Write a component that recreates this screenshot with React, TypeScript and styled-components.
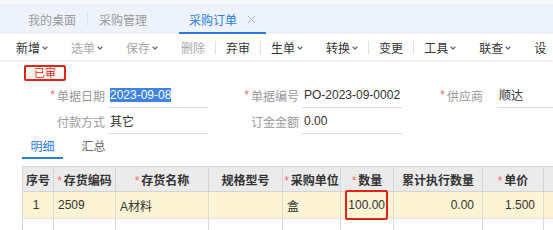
import styled, { createGlobalStyle } from 'styled-components'
import { FC, ReactNode } from 'react'

const GlobalStyle = createGlobalStyle`
  html, body {
    margin: 0;
    padding: 0;
    background: #fff;
  }
  body {
    width: 553px;
    height: 230px;
    overflow: hidden;
    font-family: "Liberation Sans", "Noto Sans CJK SC", sans-serif;
    font-size: 12px;
    color: #333;
  }
`

const Chevron: FC = () => (
  <ChevronSvg width='6' height='4' viewBox='0 0 6 4'>
    <path d='M0.6 0.6 L3 3 L5.4 0.6' fill='none' stroke='#666' strokeWidth='1.3' />
  </ChevronSvg>
)

const CloseIcon: FC = () => (
  <svg width='9' height='9' viewBox='0 0 9 9'>
    <path d='M1 1 L8 8 M8 1 L1 8' stroke='#aab4c4' strokeWidth='1' />
  </svg>
)

type ToolItem = { label: string; menu?: boolean; disabled?: boolean; sep?: boolean }

const tools: ToolItem[] = [
  { label: '新增', menu: true },
  { label: '选单', menu: true, disabled: true },
  { label: '保存', menu: true, disabled: true },
  { label: '删除', disabled: true, sep: true },
  { label: '弃审', sep: true },
  { label: '生单', menu: true },
  { label: '转换', menu: true, sep: true },
  { label: '变更', sep: true },
  { label: '工具', menu: true },
  { label: '联查', menu: true },
  { label: '设' },
]

const Field: FC<{ label: string; required?: boolean; children: ReactNode }> = ({
  label,
  required,
  children,
}) => (
  <>
    <Label>
      {required && <Star>*</Star>}
      {label}
    </Label>
    <Input>{children}</Input>
  </>
)

const columns = [
  { title: '序号', width: 31 },
  { title: '存货编码', width: 62, required: true },
  { title: '存货名称', width: 93, required: true },
  { title: '规格型号', width: 74 },
  { title: '采购单位', width: 58, required: true },
  { title: '数量', width: 53, required: true },
  { title: '累计执行数量', width: 89 },
  { title: '单价', width: 61, required: true },
  { title: '', width: 60 },
]

export default function App() {
  return (
    <Page>
      <GlobalStyle />
      <TopStrip />
      <TabBar>
        <PageTab>我的桌面</PageTab>
        <TabDivider />
        <PageTab>采购管理</PageTab>
        <PageTab $active>
          采购订单
          <CloseIcon />
        </PageTab>
      </TabBar>

      <Toolbar>
        {tools.map((t) => (
          <ToolGroup key={t.label}>
            <ToolButton $disabled={t.disabled}>
              {t.label}
              {t.menu && <Chevron />}
            </ToolButton>
            {t.sep && <ToolDivider />}
          </ToolGroup>
        ))}
      </Toolbar>

      <Content>
        <Stamp>已审</Stamp>
        <FormGrid>
          <Field label='单据日期' required>
            <Selected>2023-09-08</Selected>
          </Field>
          <Field label='单据编号' required>
            PO-2023-09-0002
          </Field>
          <Field label='供应商' required>
            顺达
          </Field>
          <Field label='付款方式'>其它</Field>
          <Field label='订金金额'>0.00</Field>
        </FormGrid>

        <DetailTabs>
          <DetailTab $active>明细</DetailTab>
          <DetailTab>汇总</DetailTab>
        </DetailTabs>

        <Table>
          <colgroup>
            {columns.map((c, i) => (
              <col key={i} style={{ width: c.width }} />
            ))}
          </colgroup>
          <thead>
            <tr>
              {columns.map((c, i) => (
                <Th key={i}>
                  {c.required && <Star>*</Star>}
                  {c.title}
                </Th>
              ))}
            </tr>
          </thead>
          <tbody>
            <BodyRow $active>
              <Td $align='center'>1</Td>
              <Td>2509</Td>
              <Td>A材料</Td>
              <Td />
              <Td>盒</Td>
              <Td $align='right'>
                <Marked>100.00</Marked>
              </Td>
              <Td $align='right'>0.00</Td>
              <Td $align='right'>1.500</Td>
              <Td />
            </BodyRow>
            <BodyRow>
              {columns.map((_, i) => (
                <Td key={i} />
              ))}
            </BodyRow>
          </tbody>
        </Table>
      </Content>
    </Page>
  )
}

const Page = styled.div`
  width: 553px;
  height: 230px;
  overflow: hidden;
`

const TopStrip = styled.div`
  height: 4px;
  background: #f7f8fa;
`

const TabBar = styled.div`
  height: 30px;
  background: #eef3fb;
  display: flex;
  align-items: stretch;
  padding-left: 18px;
`

const PageTab = styled.div<{ $active?: boolean }>`
  display: flex;
  align-items: center;
  gap: 10px;
  padding: 2px 10px 0;
  margin-left: ${(p) => (p.$active ? '22px' : '0')};
  color: ${(p) => (p.$active ? '#2c7be5' : '#9a9a9a')};
  border-bottom: 2px solid ${(p) => (p.$active ? '#2c7be5' : 'transparent')};
`

const TabDivider = styled.div`
  width: 1px;
  height: 14px;
  align-self: center;
  background: #dfe4ec;
  margin: 0 1px;
`

const Toolbar = styled.div`
  height: 26px;
  display: flex;
  align-items: center;
  padding-left: 4.5px;
  background: #fff;
  box-shadow: 0 1px 2px rgba(0, 0, 0, 0.1);
  position: relative;
  white-space: nowrap;
`

const ToolGroup = styled.div`
  display: flex;
  align-items: center;
`

const ToolButton = styled.div<{ $disabled?: boolean }>`
  display: flex;
  align-items: center;
  gap: 2px;
  padding: 0 11.5px;
  color: ${(p) => (p.$disabled ? '#a8a8a8' : '#333')};
`

const ChevronSvg = styled.svg`
  margin-top: 1px;
`

const ToolDivider = styled.div`
  width: 1px;
  height: 13px;
  background: #e2e2e2;
  margin: 0 -1.5px;
`

const Content = styled.div`
  padding: 5px 0 0 22px;
`

const Stamp = styled.div`
  margin-left: 2px;
  width: 38px;
  height: 12px;
  border: 2px solid #e2231a;
  border-radius: 2px;
  background: #fffaf0;
  color: #e2231a;
  font-size: 11px;
  line-height: 12px;
  text-align: center;
`

const FormGrid = styled.div`
  display: grid;
  grid-template-columns: 86px 100px 94px 100px 95px 80px;
  grid-auto-rows: 26px;
  margin-top: 1px;
`

const Label = styled.div`
  display: flex;
  align-items: center;
  justify-content: flex-end;
  padding-right: 3px;
  color: #999;
  &:nth-child(5) {
    padding-right: 14px;
  }
`

const Star = styled.span`
  color: #f06a6a;
  margin-right: 2px;
  font-weight: normal;
`

const Input = styled.div`
  display: flex;
  align-items: center;
  padding-left: 2px;
  border-bottom: 1px solid #dedede;
  color: #333;
  white-space: nowrap;
`

const Selected = styled.span`
  background: #3f83e6;
  color: #fff;
  line-height: 14px;
`

const DetailTabs = styled.div`
  display: flex;
  gap: 10px;
  height: 25px;
  margin-bottom: 7px;
`

const DetailTab = styled.div<{ $active?: boolean }>`
  width: 41px;
  display: flex;
  align-items: center;
  justify-content: center;
  color: ${(p) => (p.$active ? '#2c7be5' : '#666')};
  border-bottom: 2px solid ${(p) => (p.$active ? '#2c7be5' : 'transparent')};
`

const Table = styled.table`
  border-collapse: collapse;
  table-layout: fixed;
  width: 581px;
  border-top: 1px solid #d4d4d4;
  border-left: 1px solid #d4d4d4;
`

const Th = styled.th`
  height: 24px;
  padding: 0;
  background: #ebebeb;
  border-right: 1px solid #d4d4d4;
  border-bottom: 1px solid #d4d4d4;
  font-weight: bold;
  color: #333;
  text-align: center;
  white-space: nowrap;
`

const BodyRow = styled.tr<{ $active?: boolean }>`
  height: 27px;
  background: ${(p) => (p.$active ? '#fdf4d3' : '#fff')};
`

const Td = styled.td<{ $align?: 'left' | 'center' | 'right' }>`
  padding: 0 8px 0 4px;
  border-right: 1px solid #dadada;
  border-bottom: 1px solid #e4e4e4;
  text-align: ${(p) => p.$align ?? 'left'};
  color: #333;
  position: relative;
  white-space: nowrap;
`

const Marked = styled.span`
  &::after {
    content: '';
    position: absolute;
    left: 4px;
    right: 5px;
    top: -2px;
    bottom: -2px;
    border: 2px solid #e2231a;
    border-radius: 2px;
  }
`
